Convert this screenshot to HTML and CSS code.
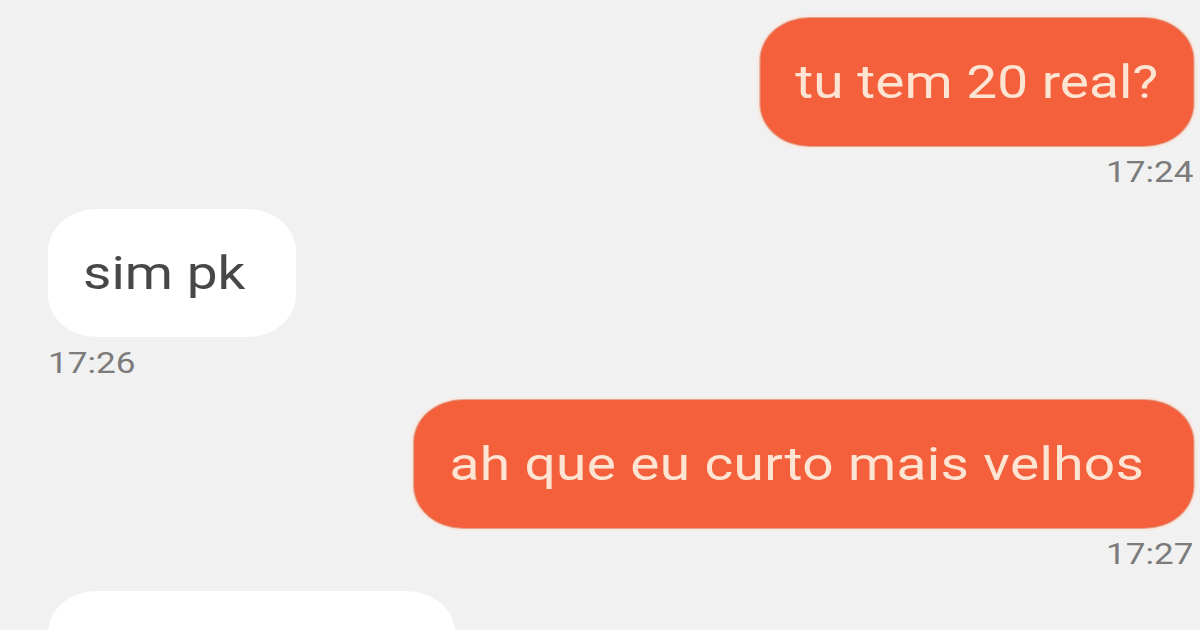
FILE: index.html
```html
<!DOCTYPE html>
<html>
<head>
<meta charset="utf-8">
<link rel="stylesheet" href="styles.css">
</head>
<body>
<div class="chat">
  <div class="msg out">
    <div class="bubble">tu tem 20 real?</div>
    <div class="time">17:24</div>
  </div>
  <div class="msg in">
    <div class="bubble">sim pk</div>
    <div class="time">17:26</div>
  </div>
  <div class="msg out">
    <div class="bubble roomy">ah que eu curto mais velhos</div>
    <div class="time">17:27</div>
  </div>
  <div class="msg in">
    <div class="bubble wide">&nbsp;</div>
  </div>
</div>
</body>
</html>
```
FILE: styles.css
```css
html, body {
  margin: 0;
  padding: 0;
  background: #f1f1f1;
  width: 1200px;
  height: 630px;
  overflow: hidden;
  font-family: Roboto, "Noto Sans", sans-serif;
}
/* the screenshot is a phone capture stretched horizontally by ~1.17 */
.chat {
  width: 1026px;
  box-sizing: border-box;
  display: flex;
  flex-direction: column;
  padding: 18px 6px 0 41px;
  gap: 19px;
  transform: scaleX(1.17);
  transform-origin: left top;
}
.msg {
  display: flex;
  flex-direction: column;
}
.msg.out { align-items: flex-end; }
.msg.in { align-items: flex-start; }
.bubble {
  font-size: 47px;
  line-height: 56px;
  padding: 36px 30px;
  border-radius: 42px;
  white-space: nowrap;
}
.out .bubble {
  background: #f3603b;
  color: #fde4d3;
  box-shadow: 0 0 0 1px rgba(200, 80, 50, 0.45), 0 0 0 3px rgba(255, 225, 210, 0.5);
}
.in .bubble {
  background: #ffffff;
  color: #474747;
  padding-right: 43px;
}
.bubble.roomy {
  padding-right: 42px;
  letter-spacing: 0.3px;
}
.wide { width: 275px; }
.time {
  font-size: 30px;
  line-height: 36px;
  color: #7b7b7b;
  margin-top: 8px;
}
```
